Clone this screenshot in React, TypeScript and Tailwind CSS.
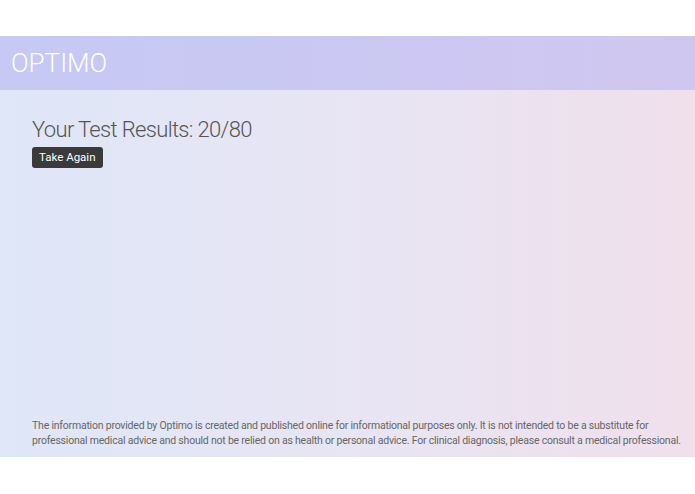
export default function App() {
  return (
    <div className="min-h-[494px] bg-white pt-[36px] pb-[37px]" style={{ fontFamily: 'Roboto, "Liberation Sans", sans-serif' }}>
      <header className="h-[54px] flex items-center px-[11px] bg-gradient-to-r from-[#c5c9f4] via-[#cbc8f3] to-[#d0c7f0]">
        <h1 className="text-[26px] font-light text-white">OPTIMO</h1>
      </header>
      <main className="h-[367px] flex flex-col justify-between pl-[32px] pr-[4px] pt-[26px] pb-[9px] bg-gradient-to-r from-[#dfe7f8] via-[#e8e5f4] to-[#f0e0ec]">
        <div>
          <h2 className="text-[22px] font-light text-[#555] leading-[28px] tracking-[-0.03em]">Your Test Results: 20/80</h2>
          <button className="mt-[3px] h-[21px] px-[7px] rounded-[3px] bg-[#3a3a3a] text-white text-[11.5px] leading-[21px]">
            Take Again
          </button>
        </div>
        <p className="max-w-[655px] text-[10.5px] leading-[15px] text-[#666] tracking-[-0.02em]">
          The information provided by Optimo is created and published online for informational purposes only. It is not intended to be a substitute for professional medical advice and should not be relied on as health or personal advice. For clinical diagnosis, please consult a medical professional.
        </p>
      </main>
    </div>
  )
}
